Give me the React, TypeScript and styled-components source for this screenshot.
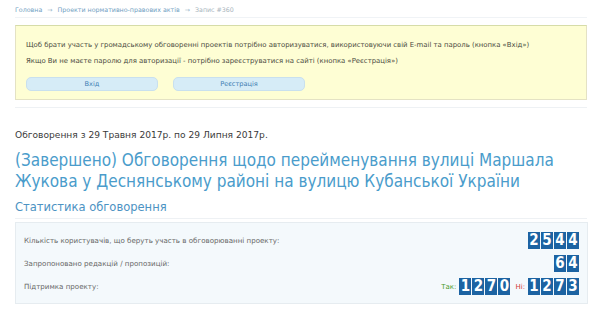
import styled, { createGlobalStyle } from "styled-components";

const GlobalStyle = createGlobalStyle`
  html, body {
    margin: 0;
    padding: 0;
    background: #fff;
  }
  body {
    font-family: "DejaVu Sans", Verdana, sans-serif;
  }
`;

const Page = styled.div`
  width: 600px;
  height: 314px;
  overflow: hidden;
  box-sizing: border-box;
  padding: 0 13px 0 15px;
`;

const Breadcrumb = styled.div`
  height: 18px;
  padding-top: 3px;
  box-sizing: border-box;
  font-size: 6.3px;
  display: flex;
  align-items: center;
  gap: 5px;
  border-bottom: 1px solid #f0f3f6;
  margin-bottom: 7px;
  padding-bottom: 2px;
`;

const Crumb = styled.span<{ current?: boolean }>`
  color: ${(p) => (p.current ? "#a8b4bd" : "#6f9ec2")};
`;

const Arrow = styled.span`
  color: #9bb8cc;
`;

const Notice = styled.div`
  background: #fefed4;
  border: 1px solid #e4e2c4;
  border-top-color: #d6dca8;
  height: 75px;
  box-sizing: border-box;
  padding: 15px 10px 0 10px;
  font-size: 6.9px;
  color: #4a4a40;
`;

const NoticeLine = styled.div`
  height: 16px;
  line-height: 8px;
`;

const Buttons = styled.div`
  display: flex;
  gap: 15px;
  margin-top: 4px;
`;

const Button = styled.div`
  width: 132px;
  height: 14px;
  border-radius: 5px;
  background: #d6ecf7;
  border: 1px solid #c9e0ee;
  box-sizing: border-box;
  display: flex;
  align-items: center;
  justify-content: center;
  color: #3f7fb3;
  font-size: 6.6px;
`;

const Divider = styled.div<{ top: number; bottom: number }>`
  height: 1px;
  background: #eef1f4;
  margin: ${(p) => p.top}px 0 ${(p) => p.bottom}px;
`;

const Period = styled.div`
  font-size: 9.1px;
  color: #3a3a3a;
  line-height: 12px;
  margin-bottom: 9px;
`;

const Title = styled.h1`
  margin: 0;
  width: 575px;
  font-family: "DejaVu Sans Condensed", "DejaVu Sans", sans-serif;
  font-size: 17px;
  font-weight: normal;
  line-height: 21px;
  color: #4a9ccb;
`;

const Subtitle = styled.h2`
  margin: 7px 0 0;
  font-family: "DejaVu Sans Condensed", "DejaVu Sans", sans-serif;
  font-size: 12.8px;
  font-weight: normal;
  line-height: 16px;
  color: #4d93c3;
`;

const Stats = styled.div`
  margin-top: 3px;
  width: 573px;
  background: #f4f9fc;
  border: 1px solid #e6ecf0;
  box-sizing: border-box;
  padding: 6px 8px 5px 8px;
  display: flex;
  flex-direction: column;
`;

const Row = styled.div`
  display: flex;
  align-items: center;
  justify-content: space-between;
  height: 23px;
`;

const Label = styled.span`
  font-size: 7.1px;
  color: #666;
`;

const Counters = styled.div`
  display: flex;
  align-items: center;
  gap: 3px;
`;

const Vote = styled.span<{ kind: "yes" | "no" }>`
  font-size: 7px;
  color: ${(p) => (p.kind === "yes" ? "#4c9a2a" : "#d03a3a")};
  margin-left: 2px;
`;

const Digits = styled.div`
  display: flex;
  gap: 1px;
`;

const Tile = styled.span`
  width: 12px;
  height: 17px;
  background: #1c63a2;
  color: #fff;
  font-family: "DejaVu Sans Condensed", "DejaVu Sans", sans-serif;
  font-weight: bold;
  font-size: 15px;
  line-height: 17px;
  text-align: center;
`;

const Counter = ({ value }: { value: string }) => (
  <Digits>
    {value.split("").map((d, i) => (
      <Tile key={i}>{d}</Tile>
    ))}
  </Digits>
);

const App = () => {
  return (
    <>
      <GlobalStyle />
      <Page>
        <Breadcrumb>
          <Crumb>Головна</Crumb>
          <Arrow>→</Arrow>
          <Crumb>Проекти нормативно-правових актів</Crumb>
          <Arrow>→</Arrow>
          <Crumb current>Запис #360</Crumb>
        </Breadcrumb>

        <Notice>
          <NoticeLine>
            Щоб брати участь у громадському обговоренні проектів потрібно
            авторизуватися, використовуючи свій E-mail та пароль (кнопка «Вхід»)
          </NoticeLine>
          <NoticeLine>
            Якщо Ви не маєте паролю для авторизації - потрібно зареєструватися
            на сайті (кнопка «Реєстрація»)
          </NoticeLine>
          <Buttons>
            <Button>Вхід</Button>
            <Button>Реєстрація</Button>
          </Buttons>
        </Notice>

        <Divider top={7} bottom={21} />

        <Period>Обговорення з 29 Травня 2017р. по 29 Липня 2017р.</Period>
        <Title>
          (Завершено) Обговорення щодо перейменування вулиці Маршала Жукова у
          Деснянському районі на вулицю Кубанської України
        </Title>
        <Subtitle>Статистика обговорення</Subtitle>

        <Divider top={3} bottom={0} />

        <Stats>
          <Row>
            <Label>
              Кількість користувачів, що беруть участь в обговорюванні проекту:
            </Label>
            <Counter value="2544" />
          </Row>
          <Row>
            <Label>Запропоновано редакцій / пропозицій:</Label>
            <Counter value="64" />
          </Row>
          <Row>
            <Label>Підтримка проекту:</Label>
            <Counters>
              <Vote kind="yes">Так:</Vote>
              <Counter value="1270" />
              <Vote kind="no">Ні:</Vote>
              <Counter value="1273" />
            </Counters>
          </Row>
        </Stats>
      </Page>
    </>
  );
};

export default App;
